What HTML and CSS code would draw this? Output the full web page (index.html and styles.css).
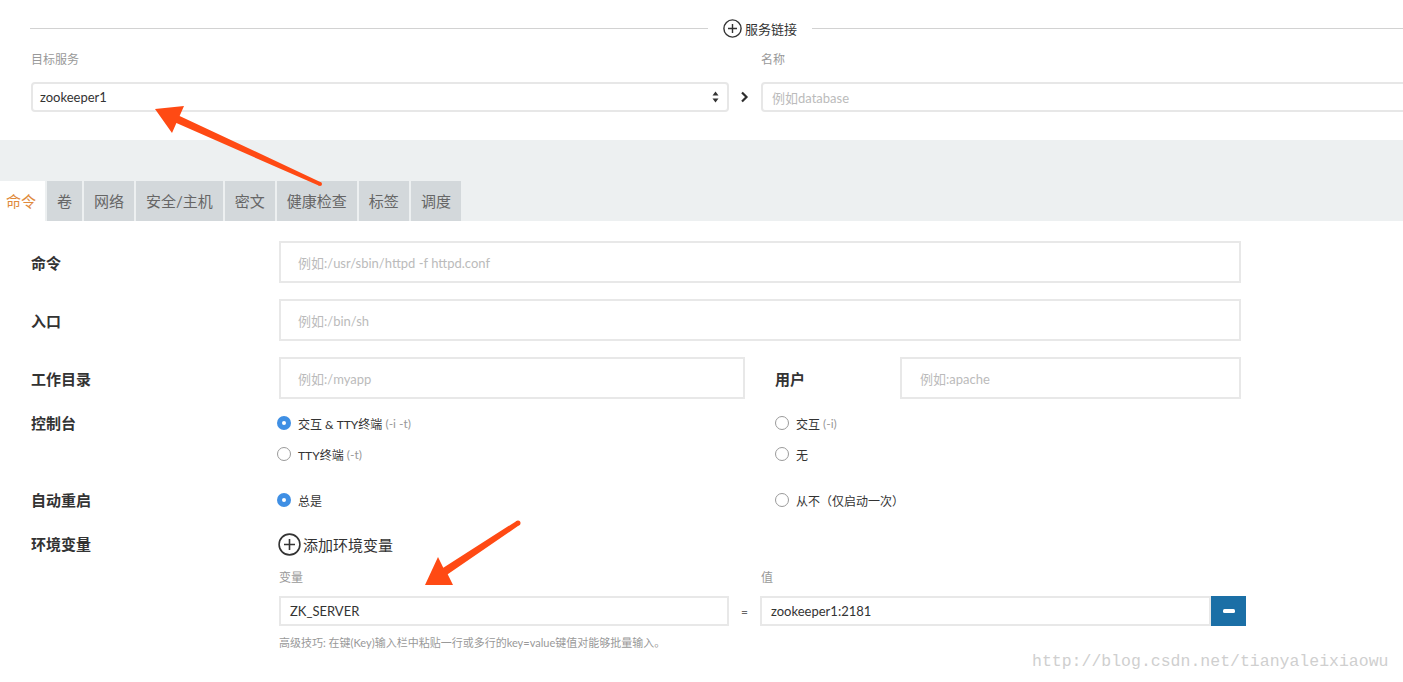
FILE: index.html
```html
<!DOCTYPE html>
<html lang="zh">
<head>
<meta charset="utf-8">
<title>服务链接</title>
<link rel="stylesheet" href="styles.css">
</head>
<body>
<div class="page">
  <section class="top">
    <div class="divider">
      <span class="dline dline-left"></span>
      <span class="dtitle">
        <svg class="plus-icon" width="19" height="19" viewBox="0 0 19 19"><circle cx="9.5" cy="9.5" r="8.6" fill="none" stroke="#333" stroke-width="1.4"/><path d="M9.5 5v9M5 9.5h9" stroke="#333" stroke-width="1.4"/></svg>
        服务链接
      </span>
      <span class="dline dline-right"></span>
    </div>
    <div class="link-row">
      <div class="link-col">
        <div class="small-label">目标服务</div>
        <div class="select-box">
          <span class="select-value">zookeeper1</span>
          <svg class="select-arrows" width="7" height="12" viewBox="0 0 7 12"><path d="M3.5 0.5L6.5 4.5H0.5Z M3.5 11.5L6.5 7.5H0.5Z" fill="#333"/></svg>
        </div>
      </div>
      <div class="chev-col">
        <svg width="9" height="12" viewBox="0 0 9 12"><path d="M2 1.5L6.5 6L2 10.5" fill="none" stroke="#2d2d2d" stroke-width="2.2"/></svg>
      </div>
      <div class="link-col">
        <div class="small-label">名称</div>
        <div class="text-box"><span class="ph">例如database</span></div>
      </div>
    </div>
  </section>

  <section class="band">
    <nav class="tabs">
      <span class="tab tab-active">命令</span>
      <span class="tab">卷</span>
      <span class="tab">网络</span>
      <span class="tab">安全/主机</span>
      <span class="tab">密文</span>
      <span class="tab">健康检查</span>
      <span class="tab">标签</span>
      <span class="tab">调度</span>
    </nav>
  </section>

  <section class="form">
    <div class="row">
      <div class="row-label">命令</div>
      <div class="field"><span class="ph">例如:/usr/sbin/httpd -f httpd.conf</span></div>
    </div>
    <div class="row row-next">
      <div class="row-label">入口</div>
      <div class="field"><span class="ph">例如:/bin/sh</span></div>
    </div>
    <div class="row row-next">
      <div class="row-label">工作目录</div>
      <div class="split">
        <div class="field field-half"><span class="ph">例如:/myapp</span></div>
        <div class="user-part">
          <div class="row-label user-label">用户</div>
          <div class="field field-user"><span class="ph">例如:apache</span></div>
        </div>
      </div>
    </div>

    <div class="row row-console">
      <div class="row-label top-label">控制台</div>
      <div class="radio-grid">
        <label class="radio"><span class="dot dot-on"></span>交互 &amp; TTY终端 <span class="hint-flag">(-i -t)</span></label>
        <label class="radio"><span class="dot"></span>交互 <span class="hint-flag">(-i)</span></label>
        <label class="radio"><span class="dot"></span>TTY终端 <span class="hint-flag">(-t)</span></label>
        <label class="radio"><span class="dot"></span>无</label>
      </div>
    </div>

    <div class="row row-restart">
      <div class="row-label top-label">自动重启</div>
      <div class="radio-grid">
        <label class="radio"><span class="dot dot-on"></span>总是</label>
        <label class="radio"><span class="dot"></span>从不（仅启动一次）</label>
      </div>
    </div>

    <div class="row row-env">
      <div class="row-label top-label env-label">环境变量</div>
      <div class="env">
        <div class="add-env">
          <svg width="23" height="23" viewBox="0 0 23 23"><circle cx="11.5" cy="11.5" r="10.4" fill="none" stroke="#333" stroke-width="1.6"/><path d="M11.5 6v11M6 11.5h11" stroke="#333" stroke-width="1.6"/></svg>
          <span>添加环境变量</span>
        </div>
        <div class="env-labels">
          <span class="small-label env-key-label">变量</span>
          <span class="small-label">值</span>
        </div>
        <div class="env-inputs">
          <div class="env-box env-key">ZK_SERVER</div>
          <span class="eq">=</span>
          <div class="env-box env-val">zookeeper1:2181</div>
          <button class="minus-btn" type="button"><span class="minus"></span></button>
        </div>
        <div class="env-hint">高级技巧: 在键(Key)输入栏中粘贴一行或多行的key=value键值对能够批量输入。</div>
      </div>
    </div>
  </section>

  <div class="watermark">http://blog.csdn.net/tianyaleixiaowu</div>

  <svg class="arrows" width="1403" height="682" viewBox="0 0 1403 682">
    <polygon points="155,109 184,106 179.6,115.9 320.8,182.2 319.2,185.8 176.4,123.1 172,133" fill="#ff4a14"/>
    <circle cx="320" cy="184" r="2" fill="#ff4a14"/>
    <polygon points="425,585 438,557 443.3,567.7 516.6,520.9 519.4,525.1 447.7,574.3 453,585" fill="#ff4a14"/>
    <circle cx="518" cy="523" r="2.5" fill="#ff4a14"/>
  </svg>
</div>
</body>
</html>
```

FILE: styles.css
```css
* { box-sizing: border-box; }

html, body {
  margin: 0;
  padding: 0;
  background: #fff;
}

body {
  font-family: Lato, "Noto Sans CJK SC", "Noto Sans", sans-serif;
  color: #333;
  overflow: hidden;
}

.page {
  position: relative;
  width: 1403px;
  height: 682px;
  overflow: hidden;
}

/* ---------- top: service link ---------- */
.top {
  height: 140px;
  padding: 19px 0 0 30px;
}

.divider {
  display: flex;
  align-items: center;
  height: 18px;
}

.dline {
  height: 1px;
  background: #d2d2d2;
}

.dline-left { width: 678px; }
.dline-right { flex: 1; }

.dtitle {
  display: flex;
  align-items: center;
  gap: 3px;
  margin: 0 15px;
  font-size: 13px;
  color: #333;
  white-space: nowrap;
}

.link-row {
  display: flex;
  padding-top: 15px;
  padding-left: 1px;
}

.link-col {
  width: 698px;
  flex: none;
}

.small-label {
  font-size: 12px;
  line-height: 16px;
  color: #999;
}

.select-box,
.text-box {
  margin-top: 14px;
  height: 30px;
  border: 2px solid #e7e7e7;
  border-radius: 4px;
  display: flex;
  align-items: center;
  padding: 0 7px 0 7px;
  font-size: 13px;
}

.select-value {
  flex: 1;
  color: #333;
}

.select-arrows {
  margin-right: 1px;
}

.text-box { padding-left: 9px; }

.ph {
  color: #bbb;
  font-size: 13px;
}

.chev-col {
  width: 32px;
  flex: none;
  display: flex;
  align-items: flex-end;
  justify-content: center;
  padding-bottom: 9px;
  padding-right: 1px;
}

/* ---------- gray band with tabs ---------- */
.band {
  height: 81px;
  background: #edf0f1;
  display: flex;
  align-items: flex-end;
}

.tabs {
  display: flex;
  gap: 2px;
}

.tab {
  height: 40px;
  line-height: 40px;
  padding: 0 10px;
  background: #d3d8db;
  color: #666;
  font-size: 15px;
  white-space: nowrap;
}

.tab-active {
  background: #fff;
  color: #e08a3c;
  padding: 0 9px 0 6px;
}

/* ---------- form ---------- */
.form {
  padding: 20px 0 0 31px;
}

.row {
  display: grid;
  grid-template-columns: 248px 962px;
  align-items: center;
}

.row-next { margin-top: 16px; }
.row-console { margin-top: 14px; align-items: start; }
.row-restart { margin-top: 26px; align-items: start; }
.row-env { margin-top: 23px; align-items: start; }

.row-label {
  font-size: 15px;
  font-weight: bold;
  color: #333;
}

.top-label { line-height: 20px; }
.env-label { line-height: 22px; }

.field {
  height: 42px;
  border: 2px solid #e8e8e8;
  display: flex;
  align-items: center;
  padding-left: 17px;
}

.split {
  display: flex;
}

.field-half { width: 466px; }

.user-part {
  display: flex;
  align-items: center;
  margin-left: 30px;
}

.user-label { width: 125px; }

.field-user {
  width: 341px;
  padding-left: 18px;
}

.radio-grid {
  display: grid;
  grid-template-columns: 498px 464px;
  row-gap: 11px;
  margin-left: -2px;
}

.radio {
  display: flex;
  align-items: center;
  height: 20px;
  font-size: 12px;
  color: #333;
  white-space: pre;
}

.hint-flag { color: #999; }

.dot {
  width: 14px;
  height: 14px;
  border-radius: 50%;
  border: 1px solid #9a9a9a;
  margin-right: 7px;
  flex: none;
  position: relative;
}

.dot-on {
  border: none;
  background: #3f8fe4;
}

.dot-on::after {
  content: "";
  position: absolute;
  left: 5px;
  top: 5px;
  width: 4px;
  height: 4px;
  border-radius: 50%;
  background: #fff;
}

/* ---------- env vars ---------- */
.env {
  display: flex;
  flex-direction: column;
}

.add-env {
  display: flex;
  align-items: center;
  gap: 2px;
  height: 22px;
  margin-left: -1px;
  font-size: 15px;
  color: #333;
}

.env-labels {
  display: flex;
  margin-top: 15px;
}

.env-key-label { width: 482px; }

.env-inputs {
  display: flex;
  align-items: center;
  margin-top: 10px;
  height: 30px;
  width: 967px;
}

.env-box {
  height: 30px;
  border: 2px solid #e8e8e8;
  display: flex;
  align-items: center;
  font-size: 13px;
  color: #333;
}

.env-key {
  width: 450px;
  padding-left: 9px;
}

.eq {
  width: 31px;
  text-align: center;
  font-size: 12px;
  color: #666;
}

.env-val {
  width: 451px;
  padding-left: 9px;
}

.minus-btn {
  width: 35px;
  height: 30px;
  border: none;
  background: #1b6fa6;
  display: flex;
  align-items: center;
  justify-content: center;
  padding: 0;
}

.minus {
  display: block;
  width: 12px;
  height: 4px;
  border-radius: 1.5px;
  background: #fff;
}

.env-hint {
  margin-top: 10px;
  font-size: 11px;
  line-height: 14px;
  color: #999;
}

/* ---------- overlays ---------- */
.watermark {
  position: absolute;
  left: 1032px;
  top: 651px;
  font-family: "Liberation Mono", "DejaVu Sans Mono", monospace;
  font-size: 16.5px;
  line-height: 22px;
  color: #cfcfcf;
  white-space: nowrap;
}

.arrows {
  position: absolute;
  left: 0;
  top: 0;
  pointer-events: none;
}
```
